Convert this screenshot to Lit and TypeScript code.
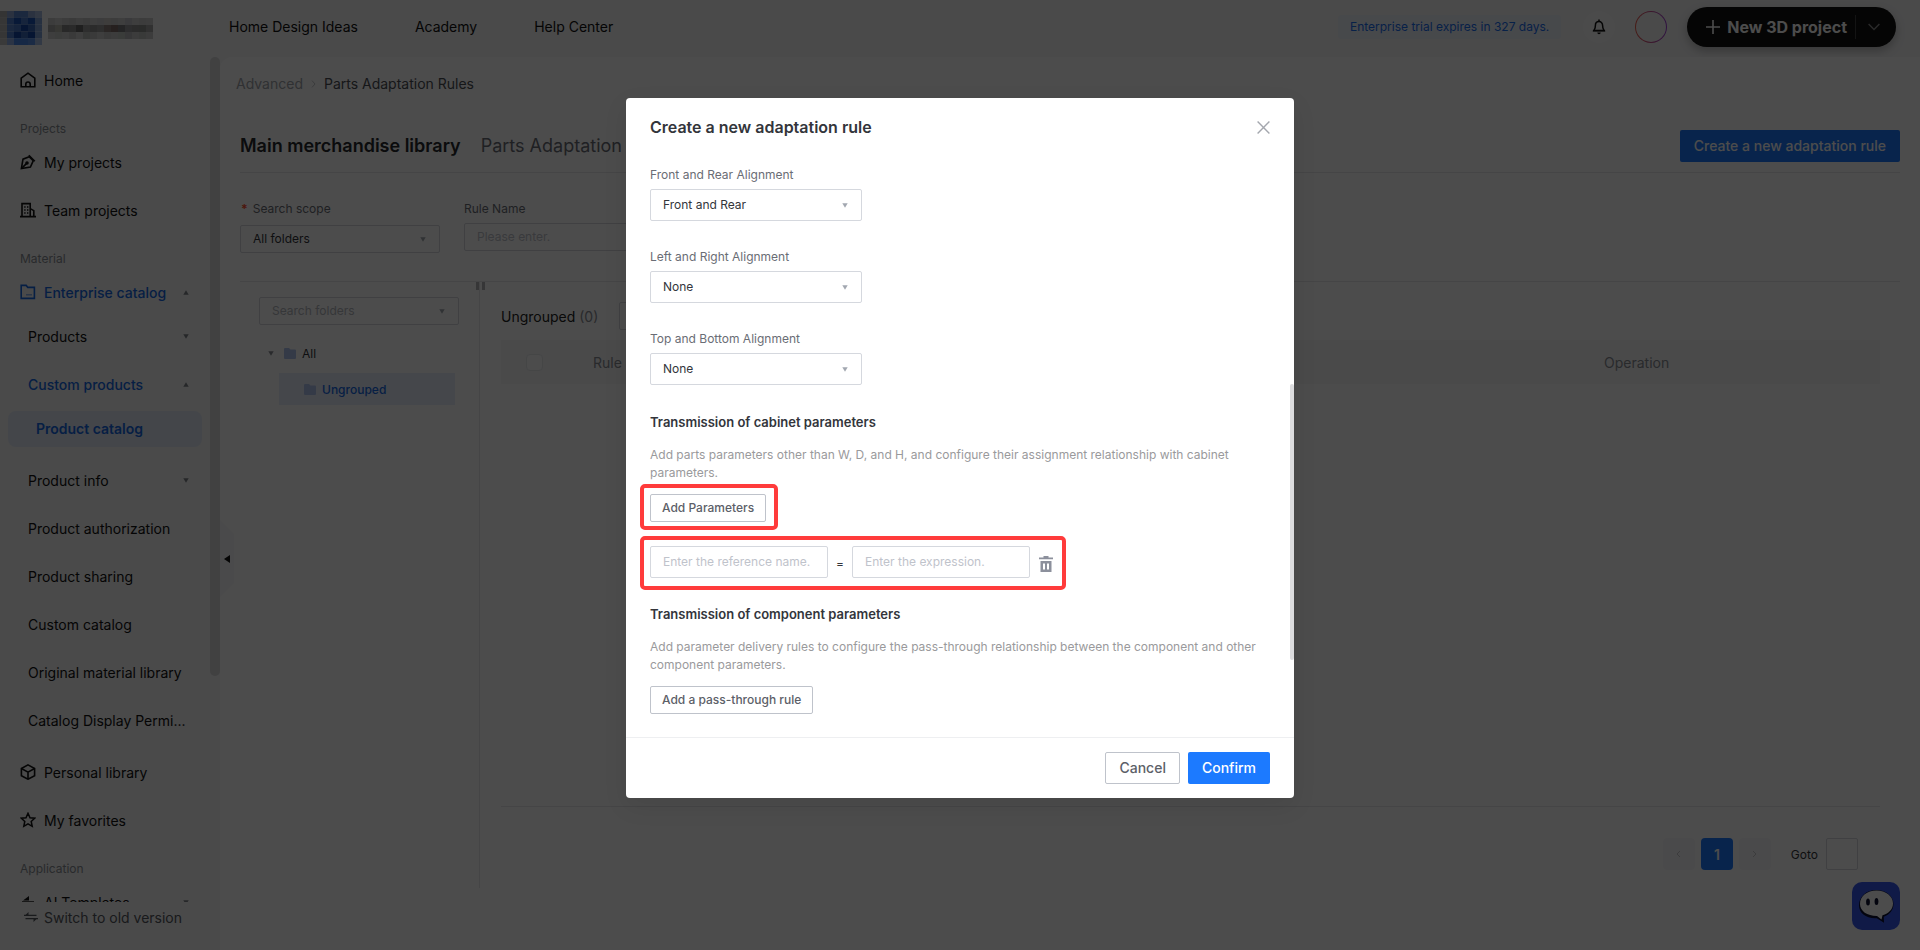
import { LitElement, html, css, svg, nothing, type TemplateResult } from "lit";
import { customElement, property } from "lit/decorators.js";
import { classMap } from "lit/directives/class-map.js";

/* ---------- shared pieces ---------- */

const stroke = (body: TemplateResult, w = 16, sw = "1.4") => svg`
  <svg width=${w} height=${w} viewBox="0 0 16 16" fill="none" stroke="currentColor" stroke-width=${sw} stroke-linejoin="miter" aria-hidden="true">${body}</svg>`;

const icons: Record<string, () => TemplateResult> = {
  home: () => stroke(svg`<path d="M1.200 6.200 8 1.200l6.800 5v8.600H1.200z"/><path d="M5.800 14.800v-2.600a2.200 2.200 0 0 1 4.400 0v2.600"/>`, 16, "1.600"),
  pen: () => stroke(svg`<path d="M9.200 2.800 3 5.200 1.400 14.600 10.400 13 13.200 6.800z"/><path d="M8.800 1.200l6 6"/><path d="M1.600 14.400 6.600 9.400"/><circle cx="7" cy="9" r="1" fill="currentColor"/>`, 16, "1.600"),
  building: () => stroke(svg`<path d="M2 14.600V1.600h8.200v13M10.200 6.600l3.600 2v6M0 14.600h16"/><path d="M4.200 5h1.400M7 5h1.400M4.200 8h1.400M7 8h1.400M4.200 11h1.400M7 11h1.400" stroke-width="1.600"/>`, 16, "1.600"),
  folder: () => stroke(svg`<path d="M1.200 1.400h5l1.600 2h6.600v11H1.200z" stroke-width="1.600"/><path d="M6 10.800h6" stroke-opacity=".5"/>`),
  cube: () => stroke(svg`<path d="M8 .9l6.600 3.600v7.200L8 15.200 1.400 11.700V4.500z"/><path d="M1.400 4.500 8 8.100l6.600-3.600M8 8.100v7"/>`, 16, "1.600"),
  star: () => stroke(svg`<path d="M8 1.300l2 4.400 4.700.5-3.500 3.200 1 4.900L8 11.800l-4.200 2.500 1-4.900L1.300 6.200 6 5.700z"/>`, 16, "1.500"),
  ai: () => svg`<svg width="16" height="16" viewBox="0 0 16 16" fill="currentColor" aria-hidden="true"><path d="M3 6.500 9 2v4.500z"/><path d="M2 7h12v1.500H2z" opacity=".7"/><path d="M3 9.500h10V15H3z" opacity=".7"/></svg>`,
  swap: () => svg`<svg width="14" height="10" viewBox="0 0 14 10" fill="none" stroke="currentColor" stroke-width="1.400" aria-hidden="true"><path d="M0 3.400h12.500M1.500 6.600H14"/><path d="M1 3.400 4.500 0v3.400zM13 6.600 9.500 10V6.600z" fill="currentColor" stroke="none"/></svg>`,
};

const caret = (up = false) => svg`
  <svg width="6" height="5" viewBox="0 0 6 5" fill="currentColor" aria-hidden="true"><path d=${up ? "M3 .3 5.700 4.700H.3z" : "M3 4.700.3.300h5.400z"}/></svg>`;

const folderGlyph = svg`
  <svg width="12" height="11" viewBox="0 0 12 11" fill="currentColor" aria-hidden="true"><path d="M1 0h4l1.500 1.500H11a1 1 0 0 1 1 1V10a1 1 0 0 1-1 1H1a1 1 0 0 1-1-1V1a1 1 0 0 1 1-1z"/></svg>`;

const base = css`
  *, *::before, *::after { box-sizing: border-box; }
  h1, h2, h3, p, ul { margin: 0; padding: 0; }
  ul { list-style: none; }
  a { color: inherit; text-decoration: none; }
  button, input, select { font: inherit; color: inherit; margin: 0; }
  button { background: none; border: 0; padding: 0; white-space: nowrap; }
  svg { display: block; flex: none; }
`;

const controls = css`
  .select { position: relative; display: flex; align-items: center; color: #a2a7b0; }
  .select select {
    appearance: none; width: 100%; height: 28px; padding: 0 24px 2px 12px; border: 1px solid #d5d8de;
    border-radius: 2px; background: #fff; color: #33353b; font-size: 12px;
  }
  .select svg { position: absolute; right: 14px; pointer-events: none; }
  .text {
    height: 28px; padding: 0 12px 2px; border: 1px solid #d5d8de; border-radius: 2px; background: #fff; font-size: 12px; min-width: 0;
  }
  .text::placeholder { color: #bfc3cb; opacity: 1; }
`;

/* ---------- top bar ---------- */

const LOGO = [
  "#b0b0b0 #8fa9d8 #5a86d0 #5a86d0 #8fa9d8 #a8bce0",
  "#b4b4b4 #5080d0 #1d55b8 #4a78c8 #1d55b8 #7fa0d8",
  "#b4b4b4 #5a86d0 #4a78c8 #1648a8 #3a68b8 #7fa0d8",
  "#b4b4b4 #5080d0 #1648a8 #3a68b8 #1648a8 #7fa0d8",
  "#c4c4c4 #8fb0e8 #4a88e8 #4a88e8 #5a90e8 #a8c0e8",
].map((row) => row.split(" "));

const WORDMARK = [
  "#c8c8c8 #d2d2d2 #c8c8c8 #c4c4c4 #cecece #c6c6c6 #d0d0d0 #c8c8cc #d0ccc8 #c8c8c8 #d0d0d0 #c4c4c8 #d0d0d0 #c8c8c8 #cccccc",
  "#a8a8a8 #b8b8b0 #888888 #8c8c8c #686868 #9c9c9c #909090 #9c9c9c #8c807c #806c68 #78787c #98989c #909090 #8c908c #a4a4a4",
  "#d0d0d0 #c8ccc8 #d0d0d0 #c4c4c4 #d2d2d2 #b8bcb8 #c4c4c4 #d0d0d0 #c4c4c4 #c8c8c8 #c4c8c4 #b8b8bc #c8c8c8 #c0c4c0 #c8c8c8",
].map((row) => row.split(" "));

const mosaic = (rows: string[][], size: number) =>
  rows.map((row, y) => row.map((fill, x) => svg`<rect x=${x * size} y=${y * size} width=${size} height=${size} fill=${fill}/>`));

@customElement("top-bar")
class TopBar extends LitElement {
  static styles = [
    base,
    css`
      :host { display: flex; align-items: center; height: 57px; padding: 0 24px 3px 0; background: #f7f7f8; color: #111; font-size: 14px; }
      .brand { display: flex; align-items: center; gap: 6px; width: 229px; padding-top: 2px; }
      .nav { display: flex; gap: 57px; flex: 1; padding-bottom: 2px; }
      .tools { display: flex; align-items: center; gap: 20px; }
      .trial { padding: 0 12px; height: 24px; line-height: 24px; border-radius: 4px; background: #edf3fc; color: #1a6ef0; font-size: 12px; margin-right: 2px; }
      .bell { width: 32px; height: 32px; border-radius: 50%; background: #fbfbfb; display: grid; place-items: center; }
      .avatar { width: 32px; height: 32px; border-radius: 50%; border: 1px solid transparent;
        background: linear-gradient(#f7f7f8, #f7f7f8) padding-box, linear-gradient(90deg, #f0604a, #a040d8) border-box; }
      .create { display: flex; align-items: center; height: 40px; padding: 0 16px 0 19px; border-radius: 20px; background: #111; color: #fff;
        font-size: 16px; font-weight: 700; box-shadow: 0 4px 10px rgba(0, 0, 0, .25); }
      .create span { margin: 0 8px 0 7px; }
      .split { width: 1px; height: 24px; background: #444; margin-right: 12px; }
    `,
  ];
  render() {
    return html`
      <a class="brand" href="#" aria-label="Home page">
        <svg width="42" height="34" viewBox="0 0 42 35" preserveAspectRatio="none">${mosaic(LOGO, 7)}</svg>
        <svg width="105" height="21" viewBox="0 0 105 21">${mosaic(WORDMARK, 7)}</svg>
      </a>
      <nav class="nav">
        <a href="#">Home Design Ideas</a><a href="#">Academy</a><a href="#">Help Center</a>
      </nav>
      <div class="tools">
        <span class="trial">Enterprise trial expires in 327 days.</span>
        <button class="bell" aria-label="Notifications">
          ${stroke(svg`<path d="M8 2.600c-2.200 0-3.600 1.600-3.600 3.800 0 3.200-.8 4-1.600 5.200h10.400c-.8-1.200-1.600-2-1.600-5.200C11.600 4.200 10.200 2.600 8 2.600z"/><path d="M8 .6v2M2 11.800h12"/><path d="M6.300 13.500h3.400a1.700 1.700 0 0 1-3.400 0z" fill="currentColor" stroke="none"/>`, 16, "1.500")}
        </button>
        <button class="avatar" aria-label="Account"></button>
        <button class="create">
          <svg width="14" height="14" viewBox="0 0 14 14" stroke="currentColor" stroke-width="1.600"><path d="M7 0v14M0 7h14"/></svg>
          <span>New 3D project</span>
          <i class="split"></i>
          <svg width="12" height="8" viewBox="0 0 12 8" fill="none" stroke="#8a8a8a" stroke-width="1.500"><path d="M.6 1 6 6.500 11.400 1"/></svg>
        </button>
      </div>`;
  }
}

/* ---------- side navigation ---------- */

interface Sub { label: string; open?: boolean; more?: boolean; active?: boolean; children?: string[] }

const CATALOG: Sub[] = [
  { label: "Products", more: true },
  { label: "Custom products", more: true, open: true, active: true, children: ["Product catalog"] },
  { label: "Product info", more: true },
  { label: "Product authorization" },
  { label: "Product sharing" },
  { label: "Custom catalog" },
  { label: "Original material library" },
  { label: "Catalog Display Permi..." },
];

@customElement("side-nav")
class SideNav extends LitElement {
  static styles = [
    base,
    css`
      :host { position: relative; display: flex; flex-direction: column; width: 220px; flex: none; min-height: 0; background: #f7f7f8; color: #111; font-size: 14px; }
      .scroll { flex: 1; min-height: 0; overflow: hidden; }
      .group { padding: 14px 20px 0; line-height: 20px; font-size: 12px; color: #8a8d94; }
      .row { display: flex; align-items: center; gap: 8px; height: 48px; padding: 0 31px 2px 20px; }
      .row .name { flex: 1; white-space: nowrap; }
      .row > .caret { color: #80838a; }
      .blue { color: #1668e3; font-weight: 500; }
      .subs { display: flex; flex-direction: column; gap: 8px; padding-bottom: 8px; }
      .sub { height: 40px; padding-left: 28px; }
      .leafs { padding: 6px 18px 6px 8px; }
      .leaf { display: flex; align-items: center; height: 36px; padding: 0 0 2px 28px; border-radius: 8px; background: #e4ebf9; color: #1668e3; font-weight: 600; }
      .foot { display: flex; align-items: center; gap: 6px; height: 48px; padding: 0 0 18px 24px; color: #55585e; }
      .bar { position: absolute; top: 0; right: 0; width: 10px; height: 70%; max-height: 619px; border-radius: 5px; background: #d9d9da; }
    `,
  ];
  private top(icon: string, label: string, opts: { more?: boolean; open?: boolean; blue?: boolean } = {}) {
    return html`<a href="#" class=${classMap({ row: true, blue: !!opts.blue })}>
      ${icons[icon]()}<span class="name">${label}</span>
      ${opts.more ? html`<span class="caret">${caret(opts.open)}</span>` : nothing}
    </a>`;
  }
  render() {
    return html`
      <nav class="scroll">
        ${this.top("home", "Home")}
        <div class="group">Projects</div>
        ${this.top("pen", "My projects")} ${this.top("building", "Team projects")}
        <div class="group">Material</div>
        ${this.top("folder", "Enterprise catalog", { more: true, open: true, blue: true })}
        <ul class="subs">
          ${CATALOG.map(
            (s) => html`<li>
              <a href="#" class=${classMap({ row: true, sub: true, blue: !!s.active })}>
                <span class="name">${s.label}</span>
                ${s.more ? html`<span class="caret">${caret(s.open)}</span>` : nothing}
              </a>
              ${s.children ? html`<div class="leafs">${s.children.map((c) => html`<a href="#" class="leaf">${c}</a>`)}</div>` : nothing}
            </li>`,
          )}
        </ul>
        ${this.top("cube", "Personal library")} ${this.top("star", "My favorites")}
        <div class="group">Application</div>
        ${this.top("ai", "AI Templates", { more: true })}
      </nav>
      <a href="#" class="foot">${icons.swap()}Switch to old version</a>
      <i class="bar"></i>`;
  }
}

/* ---------- rules page ---------- */

@customElement("rules-page")
class RulesPage extends LitElement {
  static styles = [
    base,
    controls,
    css`
      :host { position: relative; display: flex; flex-direction: column; flex: 1; min-width: 0; padding: 0 20px; background: #fff; border-top-left-radius: 12px; color: #33353b; }
      .crumbs { display: flex; align-items: center; gap: 8px; margin: 17px -4px 0; line-height: 20px; font-size: 14px; color: #4c4f56; }
      .crumbs a { color: #a0a3aa; }
      .crumbs svg { color: #c4c6cb; }
      .head { display: flex; align-items: center; justify-content: space-between; height: 79px; padding: 26px 0 1px; border-bottom: 1px solid #e6e7ea; }
      .tabs { display: flex; gap: 20px; font-size: 18px; line-height: 24px; color: #6a6d75; }
      .tabs h1 { font: inherit; font-weight: 600; color: #26282c; }
      .primary { height: 32px; padding: 0 14px; border-radius: 2px; background: #1c7aff; color: #fff; font-size: 14px; font-weight: 500; }
      .filters { display: flex; gap: 24px; padding: 26px 0; height: 109px; border-bottom: 1px solid #e6e7ea; font-size: 12px; }
      .field { display: flex; flex-direction: column; width: 200px; }
      .field label { line-height: 20px; color: #6a6d75; margin-bottom: 4px; }
      .field.req label { margin-bottom: 6px; }
      .req b { color: #ff4d2e; padding: 0 5px 0 1px; }
      .split { display: flex; }
      .tree { position: relative; width: 240px; padding: 15px 20px 0 19px; height: 606px; border-right: 1px solid #e6e7ea; font-size: 12px; }
      .tree .select select { color: #b4b7be; }
      .tree ul { padding-top: 12px; }
      .node { display: flex; align-items: center; gap: 6px; height: 32px; }
      .node > svg { color: #b0c4ee; }
      .node .caret { margin: 0 4px 0 9px; color: #8a8d94; }
      .node.on { margin: 4px 4px 0 20px; padding-left: 25px; background: #e6edfc; color: #1668e3; font-weight: 500; }
      .grip { position: absolute; top: 0; right: -6px; display: flex; gap: 3px; }
      .grip i { width: 3px; height: 8px; background: #b4b6ba; }
      .list { flex: 1; min-width: 0; padding: 20px 20px 0 21px; }
      .title { display: flex; align-items: center; height: 28px; gap: 21px; font-size: 14px; }
      .title h2 { font: inherit; color: #222; }
      .title h2 span { color: #8a8d94; }
      .title .text { width: 200px; }
      .frame { margin-top: 10px; height: 467px; border-bottom: 1px solid #e6e7ea; }
      table { width: 100%; border-collapse: collapse; table-layout: fixed; font-size: 14px; }
      th { height: 44px; padding: 0; text-align: left; font-weight: 400; color: #8a8d94; background: #f8f8f9; }
      th.pick { width: 92px; padding-left: 25px; }
      th.op { width: 276px; }
      .pick input { appearance: none; display: block; width: 17px; height: 17px; margin: 0; border: 1px solid #e8eaec; border-radius: 4px; background: #fdfdfd; }
      .pager { display: flex; align-items: center; gap: 6px; padding: 31px 22px 0 0; justify-content: flex-end; font-size: 12px; }
      .pager button { width: 32px; height: 32px; border-radius: 4px; background: #f9f9fa; color: #c8cace; display: grid; place-items: center; }
      .pager .on { background: #1c7aff; color: #fff; font-size: 14px; font-weight: 600; }
      .pager label { padding: 0 2px 0 14px; }
      .pager .text { width: 32px; height: 32px; padding: 0; }
      .fold { position: absolute; left: 0; top: 463px; width: 14px; height: 77px; padding-left: 4px; display: flex; align-items: center; background: #f9f9fa; color: #111; clip-path: polygon(0 0, 100% 18%, 100% 82%, 0 100%); }
      .chat { position: absolute; right: 20px; bottom: 20px; width: 48px; height: 48px; border-radius: 10px; background: #3858ee; }
    `,
  ];
  render() {
    return html`
      <nav class="crumbs">
        <a href="#">Advanced</a>
        <svg width="5" height="8" viewBox="0 0 5 8" fill="none" stroke="currentColor"><path d="M1 .6 4 4 1 7.400"/></svg>
        <span>Parts Adaptation Rules</span>
      </nav>
      <div class="head">
        <div class="tabs"><h1>Main merchandise library</h1><a href="#">Parts Adaptation</a></div>
        <button class="primary">Create a new adaptation rule</button>
      </div>
      <div class="filters">
        <div class="field req">
          <label for="scope"><b>*</b>Search scope</label>
          <span class="select"><select id="scope"><option>All folders</option></select>${caret()}</span>
        </div>
        <div class="field">
          <label for="rule">Rule Name</label>
          <input id="rule" class="text" placeholder="Please enter." />
        </div>
      </div>
      <div class="split">
        <aside class="tree">
          <span class="select"><select aria-label="Search folders"><option>Search folders</option></select>${caret()}</span>
          <ul>
            <li class="node"><span class="caret">${caret()}</span>${folderGlyph}All</li>
            <li class="node on">${folderGlyph}Ungrouped</li>
          </ul>
          <span class="grip"><i></i><i></i></span>
        </aside>
        <section class="list">
          <div class="title">
            <h2>Ungrouped <span>(0)</span></h2>
            <input class="text" aria-label="Filter" />
          </div>
          <div class="frame">
            <table>
              <thead><tr>
                <th class="pick"><input type="checkbox" aria-label="Select all" /></th>
                <th>Rule</th>
                <th class="op">Operation</th>
              </tr></thead>
            </table>
          </div>
          <div class="pager">
            <button aria-label="Previous page"><svg width="5" height="8" viewBox="0 0 5 8" fill="none" stroke="currentColor"><path d="M4 1 1 4l3 3"/></svg></button>
            <button class="on">1</button>
            <button aria-label="Next page"><svg width="5" height="8" viewBox="0 0 5 8" fill="none" stroke="currentColor"><path d="M1 1l3 3-3 3"/></svg></button>
            <label for="goto">Goto</label><input id="goto" class="text" />
          </div>
        </section>
      </div>
      <button class="fold" aria-label="Collapse menu"><svg width="6" height="8" viewBox="0 0 6 8" fill="currentColor"><path d="M0 4 6 0v8z"/></svg></button>
      <button class="chat" aria-label="Chat">
        <svg width="48" height="48" viewBox="0 0 48 48">
          <path d="M24 8c10 0 17.500 6 17.500 14 0 6-3.700 10.500-9.700 12.800l.2 6-7.200-4.600C14 36.800 7 31 7 23.500 7 14.500 14.200 8 24 8z" fill="#0a1030"/>
          <path d="M24.500 8.500c9.400 0 16.500 5.600 16.500 13 0 5.600-4 9.800-10.500 11.800l-1 4.200-4.500-3.500C15 34 8 29 8 22c0-8 7-13.500 16.500-13.500z" fill="#fff"/>
          <ellipse cx="16" cy="20" rx="1.900" ry="3.600" fill="#0a1030"/><ellipse cx="24.500" cy="19.500" rx="1.900" ry="3.600" fill="#0a1030"/>
        </svg>
      </button>`;
  }
}

/* ---------- dialog ---------- */

@customElement("rule-dialog")
class RuleDialog extends LitElement {
  static styles = [
    base,
    controls,
    css`
      :host { position: relative; display: flex; flex-direction: column; width: 668px; max-width: 100%; height: 700px; background: #fff; border-radius: 4px; color: #33353b; font-size: 12px;
        box-shadow: 0 8px 24px rgba(0, 0, 0, .08); }
      header { display: flex; align-items: center; justify-content: space-between; height: 58px; padding: 0 24px; }
      h2 { font-size: 16px; font-weight: 600; }
      .close { color: #a4a7ae; }
      .body { flex: 1; min-height: 0; overflow: hidden; padding: 9px 24px 0; }
      .fields { display: flex; flex-direction: column; gap: 26px; padding-bottom: 1px; }
      .field { width: 212px; }
      .field label { display: block; line-height: 20px; margin-bottom: 4px; color: #6a6d75; }
      .field select, .pair .text { height: 32px; }
      h3 { margin-top: 27px; font-size: 13px; line-height: 18px; font-weight: 600; }
      p { margin: 15px 0 12px; line-height: 18px; color: #9a9a9c; }
      .mini { height: 28px; padding: 0 11px 2px; border: 1px solid #bfc3cb; border-radius: 2px; color: #5c6068; font-weight: 500; display: block; }
      .mark { position: relative; width: max-content; }
      .mark::after { content: ""; position: absolute; inset: -10px -12px -8px -10px; border: 4px solid #ff3b3b; border-radius: 5px; pointer-events: none; }
      .pair { display: flex; align-items: center; gap: 8px; margin-top: 24px; }
      .pair::after { bottom: -12px; }
      .pair .text { width: 178px; }
      .pair span { width: 8px; text-align: center; padding-top: 3px; }
      .pair button { color: #8c909c; padding-top: 3px; }
      footer { display: flex; justify-content: flex-end; gap: 8px; padding: 14px 24px; border-top: 1px solid #eeeff1; font-size: 14px; }
      footer button { height: 32px; padding: 0 14px 2px; border-radius: 2px; font-weight: 500; }
      .cancel { border: 1px solid #bfc3cb; padding: 0 13px 2px; color: #5c6068; }
      .ok { background: #1c7aff; color: #fff; }
      .bar { position: absolute; right: 0; top: 286px; width: 4px; height: 276px; border-radius: 2px; background: #dcdcde; }
    `,
  ];
  @property({ attribute: false }) fields = [
    { id: "fr", label: "Front and Rear Alignment", value: "Front and Rear" },
    { id: "lr", label: "Left and Right Alignment", value: "None" },
    { id: "tb", label: "Top and Bottom Alignment", value: "None" },
  ];
  render() {
    return html`
      <header>
        <h2>Create a new adaptation rule</h2>
        <button class="close" aria-label="Close"><svg width="13" height="13" viewBox="0 0 13 13" stroke="currentColor" stroke-width="1.400"><path d="M.6.6l11.800 11.800M12.400.6.600 12.400"/></svg></button>
      </header>
      <div class="body">
        <div class="fields">
          ${this.fields.map(
            (f) => html`<div class="field">
              <label for=${f.id}>${f.label}</label>
              <span class="select"><select id=${f.id}><option>${f.value}</option></select>${caret()}</span>
            </div>`,
          )}
        </div>
        <h3>Transmission of cabinet parameters</h3>
        <p>Add parts parameters other than W, D, and H, and configure their assignment relationship with cabinet parameters.</p>
        <div class="mark"><button class="mini">Add Parameters</button></div>
        <div class="mark pair">
          <input class="text" aria-label="Reference name" placeholder="Enter the reference name." />
          <span>=</span>
          <input class="text" aria-label="Expression" placeholder="Enter the expression." />
          <button aria-label="Delete">
            <svg width="16" height="16" viewBox="0 0 16 16" fill="currentColor"><path d="M5.500 0h5v1.500H15V3.200H1V1.500h4.500z"/><path fill-rule="evenodd" d="M2.500 5h11v11h-11zM5 7.500v6h2v-6zm4 0v6h2v-6z"/></svg>
          </button>
        </div>
        <h3>Transmission of component parameters</h3>
        <p>Add parameter delivery rules to configure the pass-through relationship between the component and other component parameters.</p>
        <button class="mini">Add a pass-through rule</button>
      </div>
      <footer><button class="cancel">Cancel</button><button class="ok">Confirm</button></footer>
      <i class="bar"></i>`;
  }
}

@customElement("app-root")
class AppRoot extends LitElement {
  static styles = [
    base,
    css`
      :host { position: relative; display: flex; flex-direction: column; height: 100vh; overflow: hidden; background: #f7f7f8; font-family: Inter, "Liberation Sans", sans-serif; }
      .main { display: flex; flex: 1; min-height: 0; }
      .mask { position: absolute; inset: 0; display: flex; justify-content: center; align-items: flex-start; padding-top: 98px; background: rgba(0, 0, 0, .7); }
    `,
  ];
  render() {
    return html`
      <top-bar></top-bar>
      <div class="main"><side-nav></side-nav><rules-page></rules-page></div>
      <div class="mask"><rule-dialog role="dialog" aria-modal="true"></rule-dialog></div>`;
  }
}
